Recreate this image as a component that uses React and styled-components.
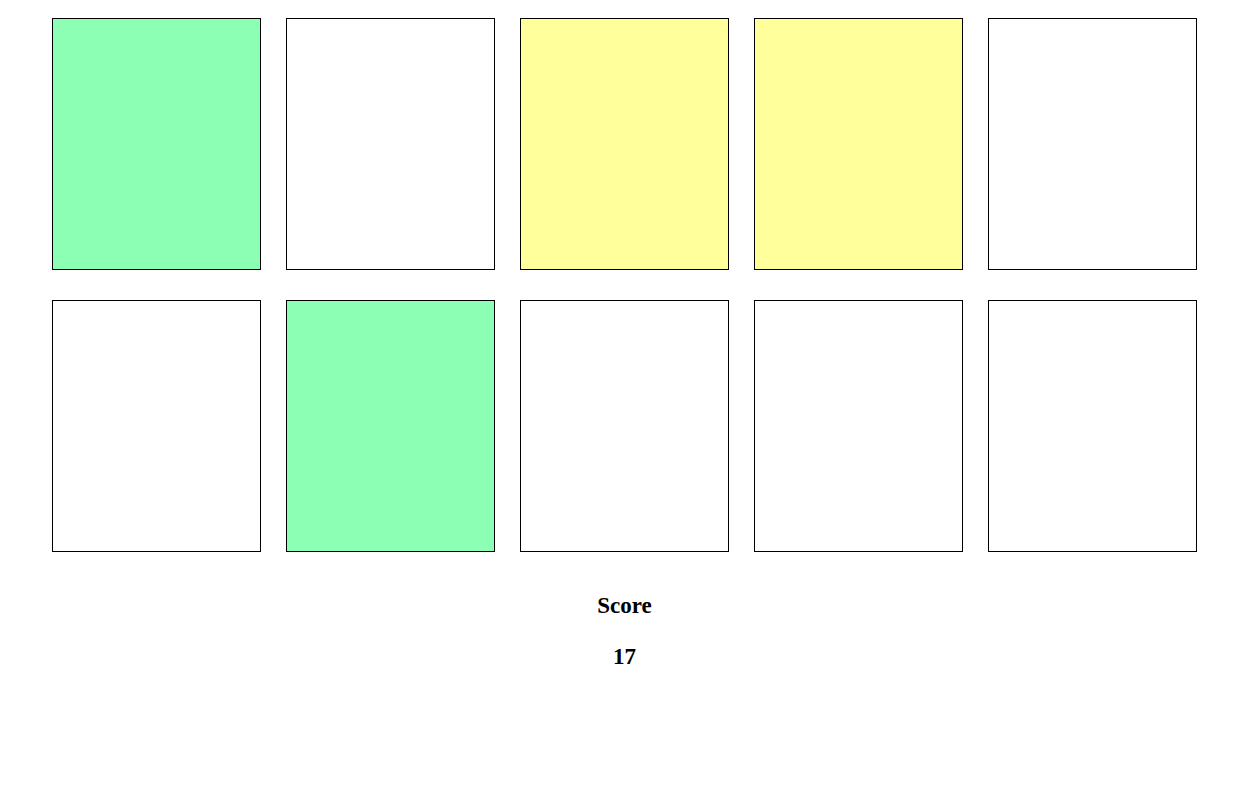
import React from "react";
import styled, { createGlobalStyle } from "styled-components";

const GlobalStyle = createGlobalStyle`
  body {
    margin: 0;
    background: #ffffff;
    color: #000000;
    font-family: "Liberation Serif", "Times New Roman", serif;
  }
`;

const fills = {
  green: "#8cffb5",
  yellow: "#ffff9c",
  blank: "#ffffff",
};

const Page = styled.main`
  padding: 18px 55px 18px 52px;
`;

const Board = styled.div`
  display: grid;
  grid-template-columns: repeat(5, minmax(0, 1fr));
  column-gap: 25px;
  row-gap: 30px;
`;

const Tile = styled.button`
  box-sizing: border-box;
  height: 252px;
  margin: 0;
  padding: 0;
  border: 1px solid #000000;
  border-radius: 0;
  background: ${({ $fill }) => fills[$fill]};
`;

const ScorePanel = styled.section`
  display: flex;
  flex-direction: column;
  align-items: center;
  gap: 24px;
  margin-top: 40px;
`;

const ScoreText = styled.h2`
  margin: 0;
  font-size: 23px;
  line-height: 27px;
  font-weight: 700;
`;

const tiles = [
  "green", "blank", "yellow", "yellow", "blank",
  "blank", "green", "blank", "blank", "blank",
];

export default function App() {
  return (
    <>
      <GlobalStyle />
      <Page>
        <Board>
          {tiles.map((fill, index) => (
            <Tile key={index} type="button" $fill={fill} aria-label={`Tile ${index + 1}`} />
          ))}
        </Board>
        <ScorePanel>
          <ScoreText>Score</ScoreText>
          <ScoreText as="p">17</ScoreText>
        </ScorePanel>
      </Page>
    </>
  );
}
